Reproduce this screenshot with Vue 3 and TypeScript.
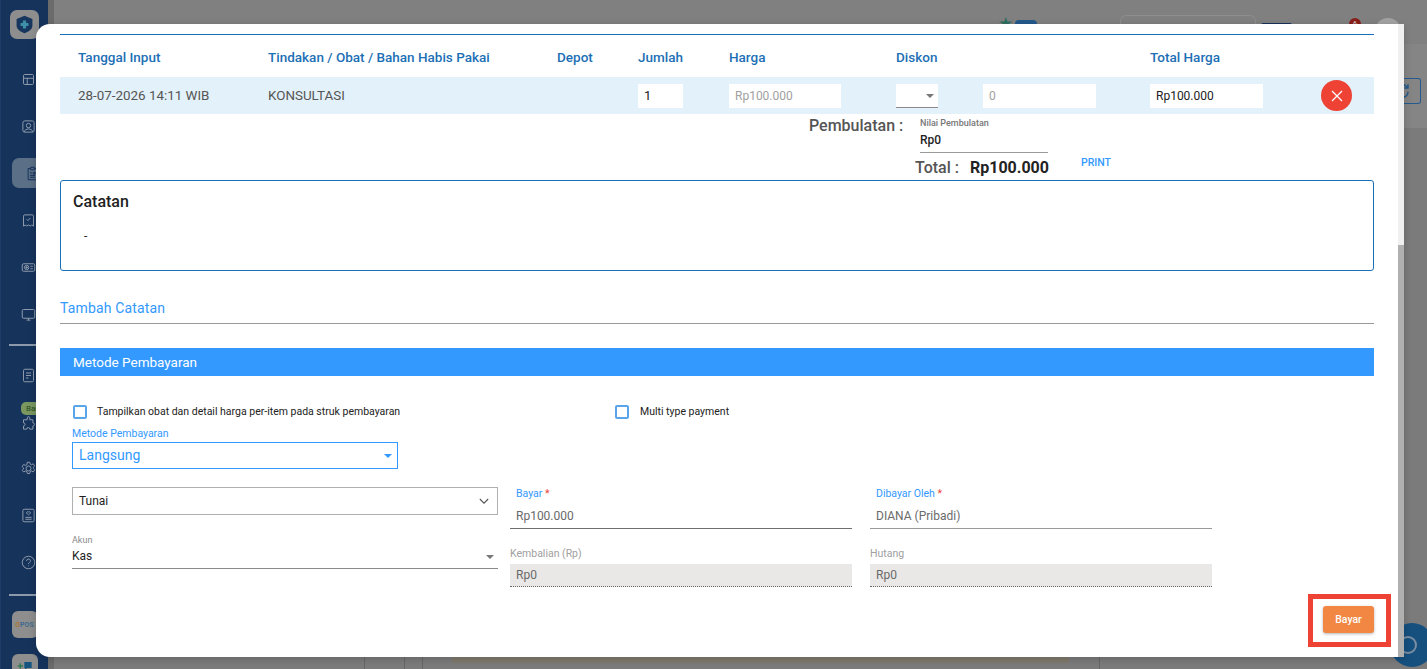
<script setup lang="ts">
import { ref } from 'vue'

const showDetail = ref(false)
const multiPayment = ref(false)

const columns = [
  'Tanggal Input',
  'Tindakan / Obat / Bahan Habis Pakai',
  'Depot',
  'Jumlah',
  'Harga',
  'Diskon',
  '',
  'Total Harga',
  ''
]

const topIcons = [
  'M6 4h12a2 2 0 0 1 2 2v12a2 2 0 0 1-2 2H6a2 2 0 0 1-2-2V6a2 2 0 0 1 2-2zM4 10h16M10 10v10',
  'M6 3h12a3 3 0 0 1 3 3v12a3 3 0 0 1-3 3H6a3 3 0 0 1-3-3V6a3 3 0 0 1 3-3zM5 21c1-4 4-5 7-5s6 1 7 5M12 7a3.500 3.500 0 1 0 0 7 3.500 3.500 0 0 0 0-7z',
  'M9 2h6v4H9zM9 4H5v18h14V4h-4M8 11h4M8 15h8M8 18h8M14 10h2v3h-2z'
]

const middleIcons = [
  'M6 3h12a2 2 0 0 1 2 2v16l-3-2-2 2-3-2-3 2-2-2-3 2V5a2 2 0 0 1 2-2zM9 10l2 2 4-4',
  'M4 6h16a2 2 0 0 1 2 2v8a2 2 0 0 1-2 2H4a2 2 0 0 1-2-2V8a2 2 0 0 1 2-2zM9 8.500a3.500 3.500 0 1 0 0 7 3.500 3.500 0 0 0 0-7zM9 10v4M7 12h4M15 10h4M15 14h4',
  'M4 4h16a2 2 0 0 1 2 2v10a2 2 0 0 1-2 2H4a2 2 0 0 1-2-2V6a2 2 0 0 1 2-2zM9 21h6M12 18v3'
]

const lowerIcons = [
  'M12 8a4 4 0 1 0 0 8 4 4 0 0 0 0-8zM10 2h4l.6 3 2.400 1 2.600-1.600 2.400 3.500-2.200 2 .1 2.200 2.100 2-2.400 3.500-2.600-1.600-2.400 1-.6 3h-4l-.6-3-2.400-1-2.600 1.600L1.800 15l2.100-2V11L1.800 9l2.400-3.500L6.800 7l2.400-1z',
  'M5 2h14a2 2 0 0 1 2 2v16a2 2 0 0 1-2 2H5a2 2 0 0 1-2-2V4a2 2 0 0 1 2-2zM12 6.500c-1-1.200-3-.6-3 1 0 1.500 2 2.700 3 3.500 1-.8 3-2 3-3.500 0-1.600-2-2.200-3-1zM7 15h10M7 18h10',
  'M12 2a10 10 0 1 0 0 20 10 10 0 0 0 0-20zM9 9.500a3 3 0 1 1 4.500 2.500c-1 .6-1.500 1.200-1.500 2.500M12 17v1'
]
</script>

<template>
  <div class="page">
    <aside class="sidebar">
      <div class="logo-tile">
        <svg viewBox="0 0 24 24" width="19" height="21">
          <path d="M12 1 22 5v8c0 5-4 8-10 10C6 21 2 18 2 13V5z" fill="#16365f" />
          <path d="M10 7h4v3h3v4h-3v3h-4v-3H7v-4h3z" fill="#3f8fa8" />
        </svg>
      </div>
      <nav class="nav-group">
        <div v-for="(d, i) in topIcons" :key="d" class="nav-item" :class="{ active: i === 2 }">
          <svg viewBox="0 0 24 24" width="15" height="15"><path :d="d" /></svg>
        </div>
        <div v-for="d in middleIcons" :key="d" class="nav-item">
          <svg viewBox="0 0 24 24" width="15" height="15"><path :d="d" /></svg>
        </div>
      </nav>
      <hr class="nav-rule" />
      <div class="nav-item doc-item">
        <svg viewBox="0 0 24 24" width="15" height="15"><path d="M6 2h12a2 2 0 0 1 2 2v16a2 2 0 0 1-2 2H6a2 2 0 0 1-2-2V4a2 2 0 0 1 2-2zM8 8h8M8 12h8M8 16h4" /></svg>
      </div>
      <div class="nav-item plugin-item">
        <span class="new-badge">Baru</span>
        <svg viewBox="0 0 24 24" width="15" height="15"><path d="M10 3a2 2 0 0 1 4 0v3h5v5a2.500 2.500 0 0 1 0 5v5h-5a2.500 2.500 0 0 0-5 0H4v-5a2.500 2.500 0 0 0 0-5V6h6z" /></svg>
      </div>
      <div v-for="d in lowerIcons" :key="d" class="nav-item">
        <svg viewBox="0 0 24 24" width="15" height="15"><path :d="d" /></svg>
      </div>
      <hr class="nav-rule lower" />
      <div class="app-tile pos-tile"><span class="pos-o">O</span><span class="pos-text">POS</span></div>
      <div class="app-tile chat-tile">
        <svg viewBox="0 0 24 24" width="22" height="16">
          <path d="M11 3h11v9h-7l-3 3v-3h-1z" fill="#16557f" />
          <path d="M5 5v8M1 9h8M3 15l-2 6" stroke="#2f7a4f" stroke-width="2" fill="none" />
        </svg>
      </div>
    </aside>

    <div class="backdrop-main">
      <header class="topbar">
        <span class="star">★</span>
        <span class="top-pill"></span>
        <span class="top-search"></span>
        <span class="top-button"></span>
        <span class="top-alert">6</span>
        <span class="top-avatar"></span>
      </header>
      <div class="toolbar">
        <span class="refresh-btn">
          <svg viewBox="0 0 24 24" width="18" height="18">
            <path d="M4 11a8 8 0 0 1 14-5l2 2M20 3v5h-5M20 13a8 8 0 0 1-14 5l-2-2M4 21v-5h5" />
          </svg>
        </span>
      </div>
      <div class="panel">
        <div class="panel-foot">
          <span class="foot-cell first"></span>
          <span class="foot-cell second"></span>
          <span class="foot-cell third"></span>
          <span class="foot-cell fourth"><i class="foot-strip"></i></span>
        </div>
      </div>
      <div class="help-bubble"><span></span></div>
    </div>

    <section class="modal">
      <div class="modal-scroll">
        <div class="table-head">
          <span v-for="(c, i) in columns" :key="i">{{ c }}</span>
        </div>
        <div class="table-row">
          <span class="cell-text">28-07-2026 14:11 WIB</span>
          <span class="cell-text">KONSULTASI</span>
          <span></span>
          <span class="cell-box">1</span>
          <span class="cell-box muted">Rp100.000</span>
          <span class="cell-select"><i class="caret grey"></i></span>
          <span class="cell-box muted">0</span>
          <span class="cell-box small">Rp100.000</span>
          <button class="remove-btn" aria-label="Hapus">
            <svg viewBox="0 0 12 12" width="12" height="12"><path d="M1 1l10 10M11 1 1 11" /></svg>
          </button>
        </div>

        <div class="rounding">
          <span class="rounding-label">Pembulatan :</span>
          <div class="rounding-field">
            <label>Nilai Pembulatan</label>
            <span>Rp0</span>
          </div>
        </div>
        <div class="total-line">
          <span class="total-label">Total :</span>
          <span class="total-value">Rp100.000</span>
          <a class="print-link">PRINT</a>
        </div>

        <div class="notes-box">
          <h3>Catatan</h3>
          <p>-</p>
        </div>

        <div class="add-note">Tambah Catatan</div>

        <div class="payment-bar">Metode Pembayaran</div>

        <div class="check-row">
          <label class="check-main">
            <input v-model="showDetail" type="checkbox" />
            <span>Tampilkan obat dan detail harga per-item pada struk pembayaran</span>
          </label>
          <label class="check-multi">
            <input v-model="multiPayment" type="checkbox" />
            <span>Multi type payment</span>
          </label>
        </div>

        <div class="method-field">
          <label>Metode Pembayaran</label>
          <div class="method-select">Langsung<i class="caret blue"></i></div>
        </div>

        <div class="payment-grid">
          <div class="left-col">
            <div class="outlined-select">
              Tunai
              <svg viewBox="0 0 12 8" width="10" height="7"><path d="M1 1l5 5 5-5" /></svg>
            </div>
            <div class="account-field">
              <label>Akun</label>
              <div class="account-select">Kas<i class="caret grey"></i></div>
            </div>
          </div>
          <div class="text-field pay-field">
            <label class="focus-label">Bayar <em>*</em></label>
            <div class="field-value">Rp100.000</div>
          </div>
          <div class="text-field by-field">
            <label class="focus-label">Dibayar Oleh <em>*</em></label>
            <div class="field-value light-line">DIANA (Pribadi)</div>
          </div>
          <div class="text-field disabled-field first-disabled">
            <label>Kembalian (Rp)</label>
            <div class="field-value">Rp0</div>
          </div>
          <div class="text-field disabled-field second-disabled">
            <label>Hutang</label>
            <div class="field-value">Rp0</div>
          </div>
        </div>

        <div class="actions">
          <div class="highlight">
            <button class="pay-btn">Bayar</button>
          </div>
        </div>
      </div>
      <div class="scrollbar"><div class="scrollbar-thumb"></div></div>
    </section>
  </div>
</template>

<style>
html,
body {
  margin: 0;
  overflow: hidden;
}
</style>

<style scoped>
.page {
  position: relative;
  display: flex;
  width: 1427px;
  height: 669px;
  overflow: hidden;
  background: #808080;
  font-family: Roboto, "Liberation Sans", sans-serif;
  color: #1f1f1f;
}

.sidebar {
  width: 48px;
  flex: none;
  display: flex;
  flex-direction: column;
  align-items: center;
  background: #16335c;
  border-left: 1px solid #1d3d68;
  box-sizing: border-box;
}

.nav-item svg path {
  fill: none;
  stroke: #8d9aab;
  stroke-width: 1.6;
}

.logo-tile {
  width: 29px;
  height: 29px;
  margin: 10px 0 0 -1px;
  border-radius: 7px;
  background: #8e8e8e;
  display: flex;
  align-items: center;
  justify-content: center;
  flex: none;
}

.nav-group {
  width: 100%;
  padding-top: 25px;
  display: flex;
  flex-direction: column;
  align-items: center;
}

.nav-item {
  width: 100%;
  height: 30px;
  margin-bottom: 17px;
  display: flex;
  align-items: center;
  justify-content: center;
  padding-left: 8px;
  box-sizing: border-box;
  flex: none;
}

.nav-item.active {
  width: 36px;
  align-self: flex-end;
  padding-left: 0;
  border-radius: 7px 0 0 7px;
  background: #5b6f86;
}

.nav-item.active svg {
  margin-left: 4px;
}

.nav-item.active svg path {
  stroke: #16335c;
}

.nav-rule {
  width: 40px;
  height: 2px;
  margin: -2px -1px 0 0;
  align-self: flex-end;
  border: 0;
  background: #8d9aab;
  flex: none;
}

.nav-item.doc-item {
  margin-top: 14px;
  margin-bottom: 0;
}

.nav-item.plugin-item {
  position: relative;
  margin-top: 22px;
  margin-bottom: 19px;
  height: 22px;
}

.new-badge {
  position: absolute;
  left: 20px;
  top: -10px;
  width: 40px;
  height: 13px;
  border-radius: 5px;
  background: #79975f;
  color: #254a21;
  font-size: 8px;
  line-height: 13px;
  padding-left: 5px;
}

.nav-rule.lower {
  margin-top: 0;
}

.app-tile {
  width: 26px;
  height: 27px;
  border-radius: 6px;
  background: #8e8e8e;
  flex: none;
  display: flex;
  align-items: center;
  justify-content: center;
  margin-top: 15px;
  font-size: 7px;
  font-weight: 700;
}

.pos-o {
  color: #a8752d;
}

.pos-text {
  color: #3c6a8f;
}

.chat-tile {
  margin-top: 16px;
}

.backdrop-main {
  position: relative;
  flex: 1;
  min-width: 0;
  display: flex;
  flex-direction: column;
  border-left: 6px solid #6b6b6b;
}

.topbar {
  height: 44px;
  flex: none;
  display: flex;
  align-items: flex-start;
  padding-top: 15px;
  box-sizing: border-box;
}

.star {
  margin: 0 0 0 944px;
  font-size: 17px;
  line-height: 17px;
  color: #2f6f60;
}

.top-pill {
  width: 22px;
  height: 16px;
  margin: 5px 0 0 2px;
  border-radius: 4px;
  background: #245a8d;
}

.top-search {
  width: 136px;
  height: 30px;
  margin-left: 83px;
  border: 1px solid #8f8f8f;
  border-radius: 6px;
  box-sizing: border-box;
}

.top-button {
  width: 31px;
  height: 10px;
  margin: 8px 0 0 5px;
  background: #16335c;
  border-radius: 2px;
}

.top-alert {
  width: 12px;
  height: 12px;
  margin: 3px 0 0 57px;
  border-radius: 50%;
  background: #8a1f1a;
  color: #d8d8d8;
  font-size: 7px;
  line-height: 12px;
  text-align: center;
}

.top-avatar {
  width: 26px;
  height: 26px;
  margin: 3px 0 0 14px;
  border-radius: 50%;
  background: #a3a3a3;
}

.toolbar {
  height: 84px;
  flex: none;
  background: #858585;
  display: flex;
  justify-content: flex-end;
  padding: 34px 6px 0 0;
  box-sizing: border-box;
}

.refresh-btn {
  width: 20px;
  height: 26px;
  border: 1px solid #245a8d;
  border-left: 0;
  border-radius: 0 3px 3px 0;
  display: flex;
  align-items: center;
  justify-content: flex-end;
  padding-right: 9px;
  box-sizing: border-box;
}

.refresh-btn svg {
  flex: none;
}

.refresh-btn path {
  fill: none;
  stroke: #245a8d;
  stroke-width: 2;
}

.panel {
  flex: 1;
  position: relative;
  display: flex;
  align-items: flex-end;
  background: #7b7b7b;
}

.panel-foot {
  width: 100%;
  height: 12px;
  display: flex;
}

.foot-cell {
  height: 12px;
  flex: none;
  border-right: 1px solid #666;
  box-sizing: border-box;
}

.foot-cell.first {
  width: 311px;
}

.foot-cell.second {
  width: 40px;
}

.foot-cell.third {
  width: 18px;
}

.foot-cell.fourth {
  width: 677px;
  padding-left: 29px;
}

.foot-strip {
  display: block;
  width: 617px;
  height: 6px;
  background: #7f7a6c;
}

.help-bubble {
  position: absolute;
  right: -7px;
  bottom: 2px;
  width: 44px;
  height: 44px;
  border-radius: 50%;
  background: #15507f;
  display: flex;
  align-items: center;
  justify-content: center;
}

.help-bubble span {
  width: 18px;
  height: 18px;
  margin-right: 8px;
  border: 2px solid #7b8da0;
  border-radius: 50%;
  box-sizing: border-box;
}

.modal {
  position: absolute;
  left: 36px;
  top: 24px;
  width: 1368px;
  height: 633px;
  display: flex;
  overflow: hidden;
  background: #fff;
  border-radius: 14px 0 0 14px;
  box-shadow: 0 2px 8px rgba(0, 0, 0, 0.18);
}

.modal-scroll {
  flex: 1;
  min-width: 0;
  padding: 10px 24px 0 24px;
  box-sizing: border-box;
}

.scrollbar {
  width: 6px;
  flex: none;
  background: #f0f0f0;
  display: flex;
  align-items: flex-end;
}

.scrollbar-thumb {
  width: 6px;
  height: 412px;
  background: #b0b0b0;
}

.table-head,
.table-row {
  display: grid;
  grid-template-columns: 190px 289px 81px 91px 167px 87px 167px 171px 53px;
  padding-left: 18px;
  align-items: center;
}

.table-head {
  height: 43px;
  padding-top: 1px;
  box-sizing: border-box;
  border-top: 1px solid #1a6fb8;
  font-size: 13.500px;
  font-weight: 500;
  color: #1d6fb5;
}

.table-row {
  height: 37px;
  background: #e3f1fa;
  font-size: 13.400px;
}

.cell-text {
  color: #555;
}

.cell-box {
  height: 24px;
  width: 113px;
  padding-left: 6px;
  box-sizing: border-box;
  background: #fff;
  font-size: 12px;
  line-height: 24px;
  color: #222;
}

.table-row .cell-box:nth-child(4) {
  width: 45px;
  font-size: 13px;
}

.table-row .cell-box:nth-child(5) {
  width: 112px;
}

.cell-box.muted {
  color: #a0a0a0;
}

.cell-select {
  position: relative;
  width: 42px;
  height: 24px;
  background: #fff;
  border-bottom: 1px solid #8a8a8a;
  box-sizing: border-box;
}

.cell-select .caret {
  right: 4px;
  top: 10px;
}

.caret {
  position: absolute;
  width: 0;
  height: 0;
  border-left: 4px solid transparent;
  border-right: 4px solid transparent;
  border-top: 4px solid #777;
}

.caret.blue {
  border-top-color: #3399ff;
}

.remove-btn {
  width: 31px;
  height: 31px;
  padding: 0;
  border: 0;
  border-radius: 50%;
  background: #ee4235;
  display: flex;
  align-items: center;
  justify-content: center;
}

.remove-btn path {
  fill: none;
  stroke: #fff;
  stroke-width: 1.300;
}

.rounding {
  display: flex;
  height: 40px;
  padding: 0 0 0 749px;
}

.rounding-label {
  width: 111px;
  margin-top: 2px;
  font-size: 16px;
  line-height: 20px;
  font-weight: 500;
  color: #555;
}

.rounding-field {
  width: 128px;
  height: 35px;
  margin-top: 3px;
  border-bottom: 1px solid #9a9a9a;
  box-sizing: content-box;
  display: flex;
  flex-direction: column;
}

.rounding-field label {
  font-size: 9px;
  line-height: 12px;
  font-weight: 500;
  color: #777;
}

.rounding-field span {
  margin-top: 3px;
  font-size: 12px;
  line-height: 16px;
  font-weight: 500;
}

.total-line {
  display: flex;
  align-items: flex-start;
  height: 26px;
  padding-left: 855px;
}

.total-label {
  width: 55px;
  padding-top: 3px;
  font-size: 16px;
  line-height: 22px;
  font-weight: 500;
  color: #555;
}

.total-value {
  width: 111px;
  padding-top: 3px;
  font-size: 16px;
  line-height: 22px;
  font-weight: 700;
  color: #222;
}

.print-link {
  font-size: 10.500px;
  line-height: 18px;
  font-weight: 500;
  color: #3399ff;
}

.notes-box {
  height: 91px;
  border: 1px solid #1a6fb8;
  border-radius: 3px;
  box-sizing: border-box;
  padding: 12px;
}

.notes-box h3 {
  margin: 0;
  font-size: 16px;
  line-height: 18px;
  font-weight: 500;
}

.notes-box p {
  margin: 18px 0 0 11px;
  font-size: 12px;
  line-height: 14px;
}

.add-note {
  height: 53px;
  padding-top: 29px;
  box-sizing: border-box;
  border-bottom: 1px solid #999;
  font-size: 14px;
  line-height: 16px;
  letter-spacing: 0.15px;
  color: #3399ff;
}

.payment-bar {
  height: 28px;
  margin-top: 24px;
  padding-left: 13px;
  background: #3399ff;
  color: #fff;
  font-size: 13.500px;
  line-height: 28px;
}

.check-row {
  position: relative;
  display: flex;
  height: 14px;
  margin-top: 29px;
  padding-left: 13px;
  font-size: 10.500px;
  line-height: 14px;
  color: #222;
}

.check-row label {
  display: flex;
  align-items: center;
}

.check-row input {
  appearance: none;
  width: 14px;
  height: 14px;
  margin: 0 11px 0 0;
  border: 2px solid #5aa5ea;
  border-radius: 2px;
  box-sizing: border-box;
}

.check-main {
  width: 542px;
}

.check-row .check-main input {
  margin-right: 10px;
}

.check-main span {
  margin-right: 1px;
}

.method-field {
  margin: 8px 0 0 12px;
  width: 326px;
}

.method-field label {
  display: block;
  font-size: 10.500px;
  line-height: 14px;
  color: #3399ff;
}

.method-select {
  position: relative;
  height: 27px;
  margin-top: 1px;
  padding-left: 6px;
  border: 1px solid #3399ff;
  box-sizing: border-box;
  font-size: 14px;
  line-height: 25px;
  color: #3399ff;
}

.method-select .caret {
  right: 5px;
  top: 11px;
}

.payment-grid {
  display: grid;
  grid-template-columns: 426px 342px 348px;
  column-gap: 12px;
  grid-template-areas:
    'left pay by'
    'left back debt';
  margin: 18px 0 0 12px;
}

.left-col {
  grid-area: left;
}

.outlined-select {
  height: 28px;
  display: flex;
  align-items: center;
  justify-content: space-between;
  padding: 0 8px 0 6px;
  border: 1px solid #b0b0b0;
  box-sizing: border-box;
  font-size: 12px;
}

.outlined-select path {
  fill: none;
  stroke: #555;
  stroke-width: 1.300;
}

.account-field {
  margin-top: 19px;
}

.account-field label {
  display: block;
  font-size: 9px;
  line-height: 12px;
  color: #8a8a8a;
}

.account-select {
  position: relative;
  height: 21px;
  margin-top: 1px;
  border-bottom: 1px solid #8a8a8a;
  font-size: 12px;
  line-height: 19px;
}

.account-select .caret {
  right: 4px;
  top: 8px;
}

.text-field {
  display: flex;
  flex-direction: column;
}

.pay-field {
  grid-area: pay;
}

.by-field {
  grid-area: by;
  margin-left: 6px;
}

.first-disabled {
  grid-area: back;
  margin-top: 18px;
}

.second-disabled {
  grid-area: debt;
  margin: 18px 0 0 6px;
}

.text-field label {
  font-size: 10.500px;
  line-height: 14px;
  color: #a0a0a0;
}

.text-field .focus-label {
  padding-left: 6px;
  color: #3399ff;
}

.focus-label em {
  font-style: normal;
  color: #ee4235;
}

.field-value {
  height: 27px;
  margin-top: 1px;
  padding: 0 6px;
  border-bottom: 1px solid #6f6f6f;
  box-sizing: border-box;
  font-size: 12px;
  line-height: 28px;
  color: #6a6a6a;
}

.light-line {
  border-bottom-color: #999;
}

.disabled-field .field-value {
  height: 23px;
  margin-top: 3px;
  background: #e9e8e6;
  border-bottom: 1px dotted #666;
  line-height: 23px;
}

.actions {
  display: flex;
  justify-content: flex-end;
  margin-top: 7px;
}

.highlight {
  width: 83px;
  height: 53px;
  margin-right: -17px;
  border: 5px solid #ee4235;
  box-sizing: border-box;
  padding-top: 7px;
  padding-left: 10px;
}

.pay-btn {
  display: block;
  width: 51px;
  height: 27px;
  padding: 0;
  border: 0;
  border-radius: 3px;
  background: #f28744;
  color: #fff;
  font-family: inherit;
  font-size: 10.500px;
  font-weight: 500;
  box-shadow: 0 1px 3px rgba(0, 0, 0, 0.3);
}
</style>
